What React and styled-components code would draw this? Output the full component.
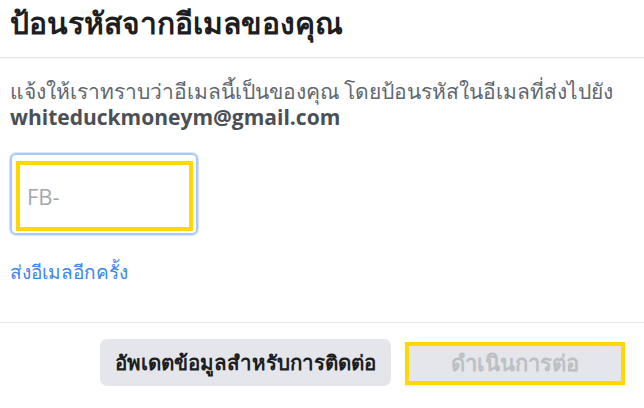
import React from "react";
import styled, { createGlobalStyle } from "styled-components";

const GlobalStyle = createGlobalStyle`
  html, body {
    margin: 0;
    padding: 0;
    background: #ffffff;
  }
  body {
    font-family: "Open Sans", "Noto Sans", "DejaVu Sans", sans-serif;
    color: #1c1e21;
  }
`;

const Dialog = styled.div`
  width: 644px;
  height: 408px;
  display: flex;
  flex-direction: column;
  background: #ffffff;
  overflow: hidden;
`;

const Header = styled.div`
  height: 58px;
  box-sizing: border-box;
  padding: 3px 10px 0;
  border-bottom: 1px solid #e4e4e4;
  box-shadow: 0 1px 1px rgba(0, 0, 0, 0.03);
`;

const Title = styled.h2`
  margin: 0;
  font-size: 30px;
  font-weight: 700;
  line-height: 40px;
  color: #1c1e21;
`;

const Body = styled.div`
  flex: 1;
  display: flex;
  flex-direction: column;
  align-items: flex-start;
  padding: 20px 10px 0;
  border-bottom: 1px solid #e8e8e8;
`;

const Description = styled.p`
  margin: 0;
  font-size: 21px;
  line-height: 26px;
  color: #606770;
  white-space: nowrap;
`;

const Email = styled.strong`
  font-weight: 700;
  color: #4b4f56;
`;

const CodeField = styled.div`
  margin-top: 23px;
  width: 188px;
  height: 82px;
  box-sizing: border-box;
  border: 2px solid #a9c9f7;
  box-shadow: 0 0 0 1px #d6e5fb;
  border-radius: 6px;
  padding: 6px 3px 2px 4px;
  display: flex;
`;

const Highlight = styled.div`
  flex: 1;
  display: flex;
  align-items: center;
  box-sizing: border-box;
  border: 4px solid #ffd800;
  padding-left: 7px;
  background: #ffffff;
`;

const Placeholder = styled.span`
  font-size: 22px;
  color: #a4a7ab;
`;

const ResendLink = styled.a`
  margin-top: 25px;
  font-size: 19px;
  line-height: 24px;
  color: #3b86f0;
  text-decoration: none;
  cursor: pointer;
`;

const Footer = styled.div`
  height: 85px;
  box-sizing: border-box;
  display: flex;
  justify-content: flex-end;
  align-items: flex-start;
  gap: 14px;
  padding: 16px 19px 0 0;
`;

const Button = styled.button`
  height: ${(p) => (p.$outlined ? "43px" : "47px")};
  margin-top: ${(p) => (p.$outlined ? "3px" : "0")};
  padding: 0 ${(p) => (p.$outlined ? "0" : "15px")};
  width: ${(p) => (p.$outlined ? "220px" : "auto")};
  border: ${(p) => (p.$outlined ? "4px solid #ffd800" : "none")};
  border-radius: ${(p) => (p.$outlined ? "0" : "7px")};
  background: #e4e6eb;
  font-family: inherit;
  font-size: ${(p) => (p.$outlined ? "22px" : "20.5px")};
  font-weight: 700;
  color: ${(p) => (p.disabled ? "#bcc0c4" : "#1c1e21")};
  box-shadow: ${(p) => (p.$outlined ? "0 2px 2px rgba(0,0,0,0.06)" : "none")};
  cursor: ${(p) => (p.disabled ? "default" : "pointer")};
`;

export default function App() {
  return (
    <>
      <GlobalStyle />
      <Dialog>
        <Header>
          <Title>ป้อนรหัสจากอีเมลของคุณ</Title>
        </Header>
        <Body>
          <Description>
            แจ้งให้เราทราบว่าอีเมลนี้เป็นของคุณ โดยป้อนรหัสในอีเมลที่ส่งไปยัง
            <br />
            <Email>whiteduckmoneym@gmail.com</Email>
          </Description>
          <CodeField>
            <Highlight>
              <Placeholder>FB-</Placeholder>
            </Highlight>
          </CodeField>
          <ResendLink>ส่งอีเมลอีกครั้ง</ResendLink>
        </Body>
        <Footer>
          <Button>อัพเดตข้อมูลสำหรับการติดต่อ</Button>
          <Button $outlined disabled>
            ดำเนินการต่อ
          </Button>
        </Footer>
      </Dialog>
    </>
  );
}
